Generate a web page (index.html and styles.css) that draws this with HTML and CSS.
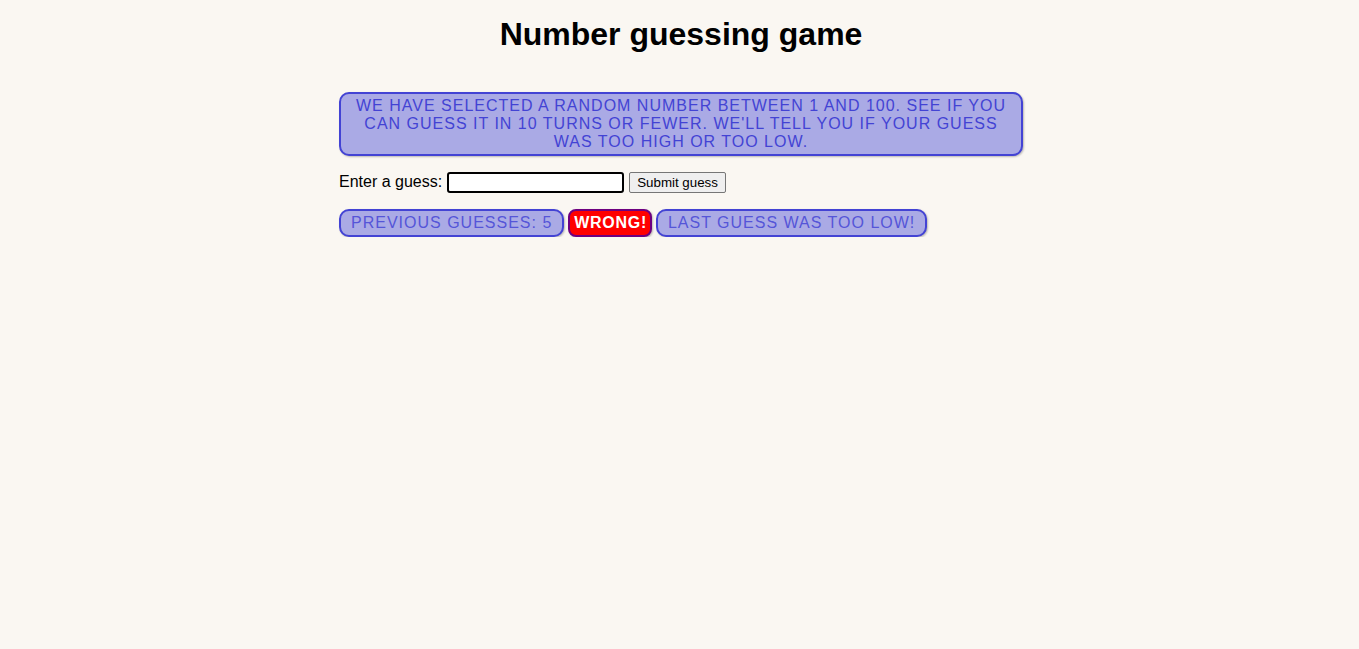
FILE: index.html
```html
<!DOCTYPE html>
<html>
<head>
<meta charset="utf-8">
<title>Number guessing game</title>
<link rel="stylesheet" href="styles.css">
</head>
<body>
<main class="game">
  <h1 class="title">Number guessing game</h1>
  <p class="intro">We have selected a random number between 1 and 100. See if you can guess it in 10 turns or fewer. We'll tell you if your guess was too high or too low.</p>
  <div class="form">
    <label class="label" for="guessField">Enter a guess:</label>
    <input type="text" id="guessField" class="guess-field">
    <button class="guess-submit" type="button">Submit guess</button>
  </div>
  <div class="results">
    <p class="badge">Previous guesses: 5</p>
    <p class="badge badge-wrong">Wrong!</p>
    <p class="badge">Last guess was too low!</p>
  </div>
</main>
</body>
</html>
```
FILE: styles.css
```css
html, body {
  margin: 0;
  padding: 0;
  background: #faf7f2;
}
body {
  font-family: "Liberation Sans", Arial, sans-serif;
  font-size: 16px;
  color: #000;
}
.game {
  width: 684px;
  margin-left: calc(50% - 340.5px);
  padding-top: 16px;
}
.title {
  margin: 0 0 39px;
  font-size: 32px;
  line-height: 37px;
  font-weight: bold;
  text-align: center;
}
.intro {
  margin: 0;
  padding: 3px 14px;
  background: #aaaae5;
  border: 2px solid #4343d4;
  border-radius: 10px;
  box-shadow: 1px 1px 2px rgba(0, 0, 0, 0.25);
  color: #4343d4;
  text-transform: uppercase;
  letter-spacing: 1px;
  line-height: 18px;
  text-align: center;
}
.form {
  display: flex;
  align-items: center;
  margin-top: 15px;
  height: 22px;
}
.label {
  font-size: 16px;
  margin-right: 5px;
}
.guess-field {
  box-sizing: border-box;
  width: 177px;
  height: 21px;
  border: 2px solid #000;
  border-radius: 3px;
  padding: 1px 2px;
  background: #fff;
  margin: 0 5px 0 0;
  outline: none;
}
.guess-submit {
  font-family: "Liberation Sans", Arial, sans-serif;
  font-size: 13.33px;
  height: 21px;
  padding: 1px 7px;
  background: #efefef;
  border: 1px solid #767676;
  border-radius: 2px;
  color: #000;
}
.results {
  display: flex;
  gap: 4px;
  margin-top: 16px;
}
.badge {
  margin: 0;
  padding: 3px 10px;
  background: #aaaae5;
  border: 2px solid #4343d4;
  border-radius: 10px;
  box-shadow: 1px 1px 2px rgba(0, 0, 0, 0.25);
  color: #5555d8;
  text-transform: uppercase;
  letter-spacing: 1px;
  line-height: 18px;
}
.badge-wrong {
  background: #ff0000;
  border-color: #6e0080;
  color: #fff;
  font-weight: bold;
  letter-spacing: 0.7px;
  padding: 3px 3px 3px 4px;
  border-radius: 8px;
}
```
